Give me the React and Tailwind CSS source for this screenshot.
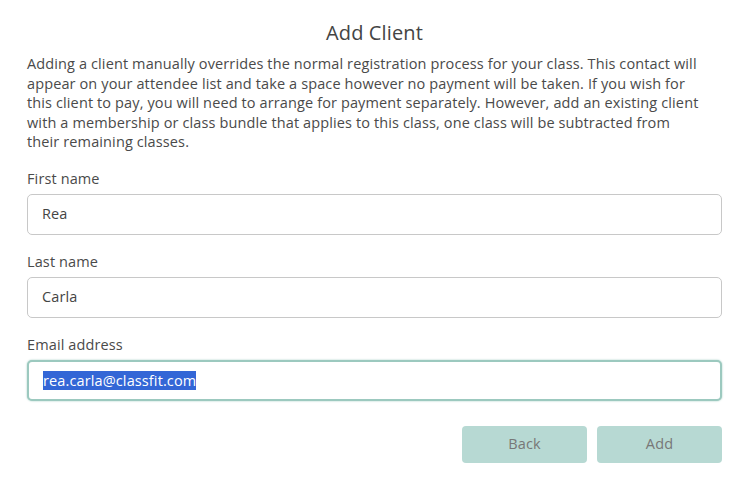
import React from 'react';

function Field({ label, value, focused, selected }) {
  return (
    <div className="flex flex-col">
      <label className="text-[14.5px] leading-[20px] text-[#4a4a4a] mb-[5px]">{label}</label>
      <div
        className={`h-[41px] rounded-[5px] bg-white flex items-center px-[14px] text-[14.5px] text-[#444] ${
          focused ? 'border-2 border-[#9cc9bf] px-[13px] shadow-[0_0_2px_#9cc9bf]' : 'border border-[#c8c8c8]'
        }`}
      >
        {selected ? <span className="bg-[#3366d6] text-white leading-[19px]">{value}</span> : <span>{value}</span>}
      </div>
    </div>
  );
}

export default function App() {
  return (
    <div className="min-h-screen bg-white font-['Open_Sans','Lato',sans-serif] tracking-[0.12px] text-[#4a4a4a]">
      <div className="w-[695px] ml-[27px] pt-[20px] flex flex-col">
        <h1 className="text-center text-[20px] leading-[26px] text-[#444]">Add Client</h1>
        <p className="mt-[8px] text-[14.5px] leading-[19.5px] text-[#4a4a4a] whitespace-nowrap">
          Adding a client manually overrides the normal registration process for your class. This contact will
          <br />
          appear on your attendee list and take a space however no payment will be taken. If you wish for
          <br />
          this client to pay, you will need to arrange for payment separately. However, add an existing client
          <br />
          with a membership or class bundle that applies to this class, one class will be subtracted from
          <br />
          their remaining classes.
        </p>
        <div className="mt-[17px] flex flex-col gap-[17px]">
          <Field label="First name" value="Rea" />
          <Field label="Last name" value="Carla" />
          <Field label="Email address" value="rea.carla@classfit.com" focused selected />
        </div>
        <div className="mt-[25px] flex justify-end gap-[10px]">
          <button className="w-[125px] h-[37px] rounded-[4px] bg-[#b7d9d3] text-[14.5px] text-[#777]">Back</button>
          <button className="w-[125px] h-[37px] rounded-[4px] bg-[#b7d9d3] text-[14.5px] text-[#777]">Add</button>
        </div>
      </div>
    </div>
  );
}
